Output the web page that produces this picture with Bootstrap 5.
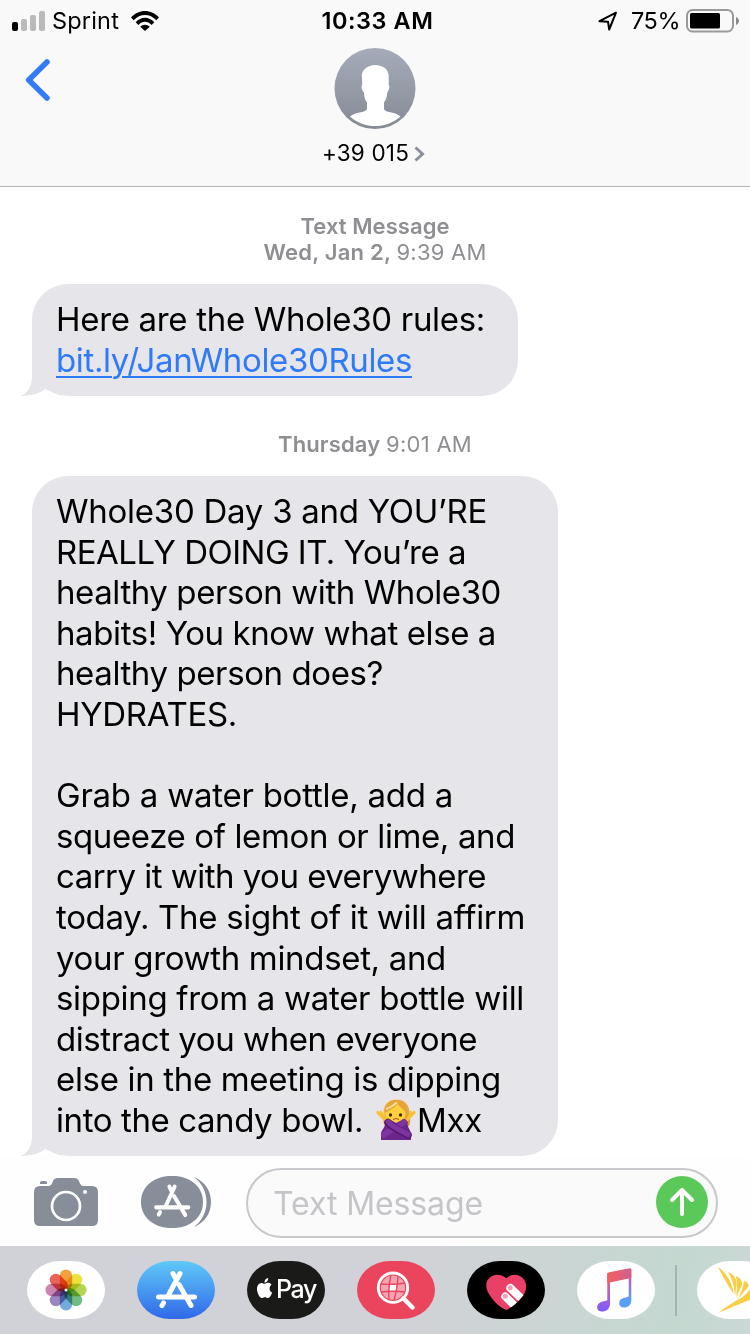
<!DOCTYPE html>
<html lang="en">
<head>
<meta charset="utf-8">
<meta name="viewport" content="width=device-width, initial-scale=1">
<title>Messages</title>
<link href="https://cdn.jsdelivr.net/npm/bootstrap@5.3.0/dist/css/bootstrap.min.css" rel="stylesheet">
<style>
body{width:750px;height:1334px;overflow:hidden;background:#fff;color:#000;font-family:Inter,"Liberation Sans",sans-serif}
svg{display:block;flex:none}
[data-w]{display:inline-block;white-space:pre}
.topbar{height:187px;background:#f9f9f9;border-bottom:1px solid #b2b2b4}
.status{height:40px;padding:1px 11px 0 12px;font-size:23.5px;line-height:41px}
.status>div{flex:1 1 0}
.clock{padding-left:4px}
.contact{height:146px;padding-top:8px}
.back{left:25px;top:18px}
.number{font-size:22.5px;line-height:24px;margin-top:12px;padding-right:3px}
.thread{height:969px;padding:26px 0 0 32px}
.stamp{width:686px;font-size:22px;line-height:26px;color:#8e8e93;text-align:center}
.stamp b{font-weight:600}
.bubble{background:#e5e5ea;border-radius:36px;padding:15px 24px;font-size:33px;line-height:40.6px}
.bubble-a{width:486px;height:112px;margin-top:19px}
.bubble-b{width:526px;height:680px;margin-top:19px}
.bubble a{color:#2f7af6;text-decoration-thickness:2px;text-underline-offset:4px}
.tail{left:-11px;bottom:0}
.textline{height:40.6px}
.compose{height:90px;padding:1px 32px 0 34px;background:#fefefe}
.field{width:472px;height:70px;border:2px solid #c7c7cc;border-radius:35px;background:#fafafa;padding:0 8px 2px 25px;font-size:32px;color:#c4c4c9;margin-top:3px}
.apps{height:88px;padding-left:27px;background:linear-gradient(100deg,#d1d2d7 55%,#c9d6d3 78%,#c4d8d0 90%,#cbd8d6)}
.pill{width:78px;height:58px;border-radius:33px/29px;overflow:hidden;flex:none;margin-right:32px}
.pill-white{background:#fff}
.pill-store{background:linear-gradient(#5fc9f8,#3068e8)}
.pill-pay{background:#1a1a18}
.pill-search{background:#ea455c}
.pill-heart{background:#000}
.rule{width:2px;height:51px;background:#a6b5b1;margin-left:-12px;margin-right:20px;flex:none}
.petals rect{mix-blend-mode:multiply}
</style>
<script src="https://cdn.jsdelivr.net/npm/bootstrap@5.3.0/dist/js/bootstrap.bundle.min.js"></script>
</head>
<body class="d-flex flex-column">
<header class="topbar flex-shrink-0">
  <div class="status d-flex align-items-center">
    <div class="d-flex align-items-center">
      <svg width="33" height="20" viewBox="0 0 33 20"><rect y="11" width="6" height="9" rx="2"/><g fill="#bababa"><rect x="9" y="8" width="6" height="12" rx="2"/><rect x="18" y="4" width="6" height="16" rx="2"/><rect x="27" width="6" height="20" rx="2"/></g></svg>
      <span data-w="67" style="margin-left:7px">Sprint</span>
      <svg style="margin-left:12px" width="28" height="20" viewBox="0 0 28 20"><path d="M0 6.6C7.5-2.2 20.500-2.200 28 6.600L25.300 9.300C19 2.300 9 2.300 2.700 9.300ZM4.700 11.300C10 5.200 18 5.200 23.300 11.300L20.600 14C16.500 9.700 11.500 9.700 7.400 14ZM9.200 15.700C12 13 16 13 18.800 15.700L14 20Z"/></svg>
    </div>
    <div class="clock text-center fw-semibold"><span data-w="112">10:33 AM</span></div>
    <div class="d-flex align-items-center justify-content-end">
      <svg width="20" height="20" viewBox="0 0 20 20" fill="none" stroke="#000" stroke-width="2" stroke-linejoin="round"><path d="M1.500 10.200L18 1.700L11.200 18.500L10 10.700Z"/></svg>
      <span data-w="49" style="margin-left:13px">75%</span>
      <svg style="margin-left:6px" width="53" height="24" viewBox="0 0 53 24"><rect x="1" y="1" width="46" height="21.500" rx="5.500" fill="none" stroke="#9a9a9a" stroke-width="2"/><rect x="4" y="4" width="30" height="15.500" rx="1.500"/><path d="M50 8C54 10 54 14 50 16Z" fill="#888"/></svg>
    </div>
  </div>
  <div class="contact position-relative d-flex flex-column align-items-center">
    <svg class="back position-absolute" width="26" height="44" viewBox="0 0 26 44" fill="none" stroke="#337af7" stroke-width="5.500" stroke-linecap="round" stroke-linejoin="round"><path d="M22 4L3.700 22L22 40"/></svg>
    <svg class="me-1" style="margin-left:3px" width="82" height="81" viewBox="0 0 82 81"><defs><linearGradient id="av" x2="0" y2="1"><stop stop-color="#a5abb9"/><stop offset="1" stop-color="#858a95"/></linearGradient></defs><circle cx="41" cy="40.500" r="40.500" fill="url(#av)"/><path fill="#fff" d="M41 17C49 17.500 55 21 54.700 29V37C56.500 38 54.500 43.500 53.200 44.500C53 49 52 52 50 54.500V61C51 65 60 63 66.500 68.500C52 81.300 30 81.300 16 68.500C23 63 32 65 33 61V54.500C31 52 30 49 30 44.500C28 43 26.500 38 28.300 37L27.800 27C28.500 21 34 17.500 41 17Z"/></svg>
    <div class="number d-flex align-items-center"><span data-w="87">+39 015</span><svg style="margin:2px 0 0 5px" width="11" height="16" viewBox="0 0 11 16" fill="none" stroke="#8b909b" stroke-width="3"><path d="M1.500 1.500L8.500 8L1.500 14.500"/></svg></div>
  </div>
</header>

<main class="thread flex-shrink-0">
  <div class="stamp"><b data-w="149">Text Message</b><br><span class="text-nowrap"><b data-w="133">Wed, Jan 2, </b><span data-w="90">9:39 AM</span></span></div>
  <div class="bubble bubble-a position-relative">
    <svg class="tail position-absolute" width="40" height="34" viewBox="0 0 40 34"><path fill="#e5e5ea" d="M11 0V15C11 24 7 31 0 34C10 34 18 32 24.500 27L40 34V0Z"/></svg>
    <svg class="tail position-absolute" width="48" height="8" viewBox="0 0 48 8"><path fill="#fff" d="M1 8C11 8 18 6 24.500 1C30 5 37 8 46 8Z"/></svg>
    <div class="position-relative"><div class="textline"><span data-w="429">Here are the Whole30 rules:</span></div><div class="textline"><a href="#" data-w="356">bit.ly/JanWhole30Rules</a></div></div>
  </div>
  <div class="stamp" style="margin-top:35px"><b data-w="108">Thursday </b><span data-w="86">9:01 AM</span></div>
  <div class="bubble bubble-b position-relative">
    <svg class="tail position-absolute" width="40" height="34" viewBox="0 0 40 34"><path fill="#e5e5ea" d="M11 0V15C11 24 7 31 0 34C10 34 18 32 24.500 27L40 34V0Z"/></svg>
    <svg class="tail position-absolute" width="48" height="8" viewBox="0 0 48 8"><path fill="#fff" d="M1 8C11 8 18 6 24.500 1C30 5 37 8 46 8Z"/></svg>
    <div class="position-relative">
    <div class="textline"><span data-w="431">Whole30 Day 3 and YOU’RE</span></div>
    <div class="textline"><span data-w="410">REALLY DOING IT. You’re a</span></div>
    <div class="textline"><span data-w="445">healthy person with Whole30</span></div>
    <div class="textline"><span data-w="440">habits! You know what else a</span></div>
    <div class="textline"><span data-w="327">healthy person does?</span></div>
    <div class="textline"><span data-w="181">HYDRATES.</span></div>
    <div class="textline"></div>
    <div class="textline"><span data-w="397">Grab a water bottle, add a</span></div>
    <div class="textline"><span data-w="459">squeeze of lemon or lime, and</span></div>
    <div class="textline"><span data-w="430">carry it with you everywhere</span></div>
    <div class="textline"><span data-w="469">today. The sight of it will affirm</span></div>
    <div class="textline"><span data-w="390">your growth mindset, and</span></div>
    <div class="textline"><span data-w="468">sipping from a water bottle will</span></div>
    <div class="textline"><span data-w="421">distract you when everyone</span></div>
    <div class="textline"><span data-w="445">else in the meeting is dipping</span></div>
    <div class="textline d-flex"><span data-w="307">into the candy bowl.</span>
      <svg role="img" aria-label="woman gesturing no" style="margin:-1px 0 0 13px" width="40" height="41" viewBox="0 0 40 41">
        <defs><linearGradient id="hr" x2="1" y2="1"><stop stop-color="#fbd56a"/><stop offset="1" stop-color="#d6922a"/></linearGradient></defs>
        <path fill="url(#hr)" d="M20 .5C30 0 34 8 33.500 15C34 20 35 23 33 27H9C6 22 7 18 7.500 12C8 5 13 .5 20 .5Z"/>
        <ellipse cx="19.500" cy="14.500" rx="10" ry="10.500" fill="#ffd13c"/>
        <path fill="#e5a53c" d="M8.500 14C12 12 18 9.500 22 5C24 9 28 10.500 31.500 14C32 3 26 1 20 1C12 1 7.500 7 8.500 14Z"/>
        <path d="M10 10Q16 8 21 3.500" stroke="#fce08a" stroke-width="2" fill="none"/>
        <g fill="#4b2b16"><circle cx="14.500" cy="16" r="1.700"/><circle cx="24.500" cy="16" r="1.700"/></g>
        <path d="M17 20.500Q20 18.500 23 20.500" stroke="#a65420" fill="none"/>
        <path d="M2 13.500L12 24M38 13.500L28 24" stroke="#f9c12f" stroke-width="3.200" stroke-linecap="round"/>
        <path d="M5 12.500L8 19M35 12.500L32 19" stroke="#f9c12f" stroke-width="1.800" stroke-linecap="round"/>
        <path fill="#6d258b" d="M9 23L13 20L20 24L28 20L32 23C30 27 35 31 35 35V41H5V35C5 31 10 28 9 23Z"/>
        <path d="M28 23C24 28 15 30 8 36" stroke="#7e34a0" stroke-width="6" fill="none" stroke-linecap="round"/><path d="M12 23.500C16 29 25 31 32 36" stroke="#51176e" stroke-width="7.500" fill="none" stroke-linecap="round"/><path d="M12.500 23C16 28 25 31 32 35.500" stroke="#7e34a0" stroke-width="5.500" fill="none" stroke-linecap="round"/>
      </svg>
      <span style="margin-left:1px" data-w="65">Mxx</span></div>
    </div>
  </div>
</main>

<section class="compose d-flex align-items-center flex-shrink-0">
  <svg class="mt-1" style="margin-bottom:3px" width="64" height="48" viewBox="0 0 64 48"><path fill="#878d99" d="M6 8H14C20 8 17 0 24 0H40C47 0 44 8 50 8H58Q64 8 64 14V42Q64 48 58 48H6Q0 48 0 42V14Q0 8 6 8Z"/><path fill="#878d99" d="M6 6V4.500Q6 3 8 3H11Q13 3 13 4.500V6Z"/><circle cx="32" cy="28" r="14" fill="none" stroke="#fff" stroke-width="2.700"/><circle cx="51" cy="14" r="2" fill="#fff"/></svg>
  <svg class="mt-1" style="margin-left:43px;margin-bottom:3px" width="70" height="52" viewBox="0 0 70 52"><path fill="#878d99" d="M28 0H34C50 1 62 11 62 26S50 51 34 52H28C12 51 0 41 0 26S12 1 28 0Z"/><path fill="#878d99" d="M53 1C63 5 70 14 70 26S63 47 53 51C61 45 65.500 36 65.500 26S61 7 53 1Z"/><g transform="translate(-3.500 -1.800) scale(.885 .96)" stroke="#fff" stroke-width="4.400" stroke-linecap="round" fill="none"><path d="M42 13L31.500 34M25.500 39.500L24 42M36 13L39 18.500M41.500 23L54 42.500M21 34.500H57.500"/></g></svg>
  <div class="field d-flex align-items-center justify-content-between" style="margin-left:35px"><span data-w="210" style="padding-top:3px">Text Message</span>
    <svg width="52" height="52" viewBox="0 0 52 52"><circle cx="26" cy="26" r="26" fill="#5bc95a"/><path d="M26 38V14M16 24L26 14L36 24" fill="none" stroke="#fff" stroke-width="4" stroke-linecap="round" stroke-linejoin="round"/></svg>
  </div>
</section>

<nav class="apps d-flex align-items-center flex-shrink-0 overflow-hidden">
  <div class="pill pill-white"><svg width="78" height="58" viewBox="0 0 78 58"><g class="petals" transform="translate(39 29)">
    <rect x="-6.200" y="-20.500" width="12.400" height="20.500" rx="6.200" fill="#f4a040"/><rect x="-6.200" y="-20.500" width="12.400" height="20.500" rx="6.200" fill="#ede13c" transform="rotate(45)"/><rect x="-6.200" y="-20.500" width="12.400" height="20.500" rx="6.200" fill="#b5d355" transform="rotate(90)"/><rect x="-6.200" y="-20.500" width="12.400" height="20.500" rx="6.200" fill="#72bd86" transform="rotate(135)"/><rect x="-6.200" y="-20.500" width="12.400" height="20.500" rx="6.200" fill="#73a9dc" transform="rotate(180)"/><rect x="-6.200" y="-20.500" width="12.400" height="20.500" rx="6.200" fill="#9b86bf" transform="rotate(225)"/><rect x="-6.200" y="-20.500" width="12.400" height="20.500" rx="6.200" fill="#cb85b0" transform="rotate(270)"/><rect x="-6.200" y="-20.500" width="12.400" height="20.500" rx="6.200" fill="#ea6258" transform="rotate(315)"/></g><circle cx="39" cy="29" r="1.500" fill="#fff"/></svg></div>
  <div class="pill pill-store"><svg width="78" height="58" viewBox="0 0 78 58" stroke="#fff" stroke-width="5" stroke-linecap="round" fill="none"><path d="M43 12.500L31.500 34M26.500 42L25 44.500M36 12.500L39 18M42 23.500L54 44.500M21.500 36H57.500"/></svg></div>
  <div class="pill pill-pay d-flex align-items-center text-white"><svg style="margin:-4px 0 0 9px" width="17" height="20" viewBox="1 0 22 24" preserveAspectRatio="none" fill="#fff"><path d="M12.152 6.896c-.948 0-2.415-1.078-3.960-1.040-2.040.027-3.910 1.183-4.961 3.014-2.117 3.675-.546 9.103 1.519 12.090 1.013 1.454 2.208 3.090 3.792 3.039 1.520-.065 2.090-.987 3.935-.987 1.831 0 2.350.987 3.960.948 1.637-.026 2.676-1.480 3.676-2.948 1.156-1.688 1.636-3.325 1.662-3.415-.039-.013-3.182-1.221-3.220-4.857-.026-3.040 2.480-4.494 2.597-4.559-1.429-2.090-3.623-2.324-4.390-2.376-2-.156-3.675 1.090-4.610 1.090zM15.530 3.830c.843-1.012 1.400-2.427 1.245-3.830-1.207.052-2.662.805-3.532 1.818-.780.896-1.454 2.338-1.273 3.714 1.338.104 2.715-.688 3.559-1.701"/></svg><span data-w="40" style="font-size:25px;font-weight:500;margin-left:3px">Pay</span></div>
  <div class="pill pill-search"><svg width="78" height="58" viewBox="0 0 78 58"><circle cx="36" cy="26.700" r="13" fill="#f5a5b2"/><path fill="#fff" d="M33 24H39.500L38.500 30H32Z"/><g fill="none" stroke="#ea455c" stroke-width="1.400"><circle cx="36" cy="26.700" r="12.800"/><path d="M34 14Q31 26 32 39M41 14Q40.500 28 37 39M23 23Q36 24 49 22M23 31Q36 29.500 49 31"/></g><circle cx="36" cy="26.700" r="14.700" fill="none" stroke="#fff" stroke-width="2.900"/><path d="M46.500 37.500L55.500 46.500" stroke="#fff" stroke-width="4.500" stroke-linecap="round"/></svg></div>
  <div class="pill pill-heart"><svg width="78" height="58" viewBox="0 0 78 58"><defs><clipPath id="ht"><path d="M39.300 17.500C44 12 53 13 57 18.500C61 25 59 31 55 36C50 42 44 47 39.300 49C34 47 28 42 24 36C19.500 30 17.500 24 21 18.500C25 13 34 12 39.300 17.500Z"/></clipPath></defs><g clip-path="url(#ht)"><rect width="78" height="58" fill="#ea4068"/><path d="M43.300 27L59 42M38.300 35.500L52 49" stroke="#fff" stroke-width="8" stroke-linecap="round"/><circle cx="43.300" cy="26.800" r="2.500" fill="#f4a0b8"/><circle cx="38.300" cy="35.300" r="2.500" fill="#f4a0b8"/></g></svg></div>
  <div class="pill pill-white"><svg width="78" height="58" viewBox="0 0 78 58"><defs><linearGradient id="ml" gradientUnits="userSpaceOnUse" x1="0" y1="8" x2="0" y2="50"><stop stop-color="#f3605f"/><stop offset=".35" stop-color="#d561a0"/><stop offset="1" stop-color="#7b5cff"/></linearGradient><linearGradient id="mr" gradientUnits="userSpaceOnUse" x1="0" y1="8" x2="0" y2="46"><stop stop-color="#f3605f"/><stop offset=".3" stop-color="#b568bb"/><stop offset=".8" stop-color="#5a9ff5"/></linearGradient><linearGradient id="mb" x2="1"><stop stop-color="#f3605f"/><stop offset="1" stop-color="#d0608e"/></linearGradient></defs><path fill="url(#ml)" d="M30.300 12H33V43C33 48 29 50.500 25 50.500S19.500 47.500 20.500 44.500C21.500 41 26 40.500 30.300 39.500Z"/><path fill="url(#mr)" d="M51.700 8H54.300V39C54.300 44 51 46.500 47 46.500S41.500 43.500 42.500 40.500C43.500 37 48 37 51.700 35.500Z"/><path fill="url(#mb)" d="M30.300 13Q30.300 11.700 32 11.300L52.500 7.300Q54.300 7 54.300 8.500V17L30.300 22Z"/></svg></div>
  <div class="rule"></div>
  <div class="pill pill-white me-0"><svg width="78" height="58" viewBox="0 0 78 58" fill="#f9ce45"><path d="M21 6C28 10 35 21 37 33C31 25 26 16 21 6ZM31 11Q40 14 39.500 24L38 35Q37 20 31 11ZM39 15Q46 18 45 24L39 37Q41 25 39 15ZM47 20Q53 22 51 26L40 39Q46 29 47 20ZM56 24Q62 27 56 31L38 42Q51 33 56 24ZM21 52Q38 39 60 29V36Q40 44 21 52Z"/></svg></div>
</nav>
<script>
// Track each text run so that it spans its nominal width
document.querySelectorAll('[data-w]').forEach(function (el) {
  var spare = el.dataset.w - el.getBoundingClientRect().width;
  el.style.letterSpacing = (spare / el.textContent.length) + 'px';
});
</script>
</body>
</html>
